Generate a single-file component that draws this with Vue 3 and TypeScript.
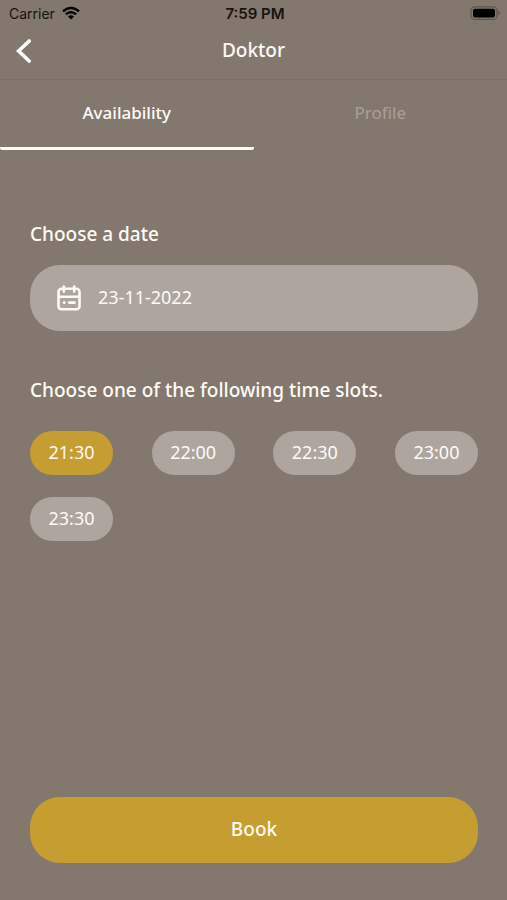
<script setup lang="ts">
import { ref } from 'vue'

type Tab = 'Availability' | 'Profile'

const tabs: Tab[] = ['Availability', 'Profile']
const activeTab = ref<Tab>('Availability')
const date = ref('23-11-2022')
const slots: string[] = ['21:30', '22:00', '22:30', '23:00', '23:30']
const selectedSlot = ref('21:30')
</script>

<template>
  <div class="screen">
    <div class="status">
      <div class="carrier">
        <span>Carrier</span>
        <svg class="wifi" viewBox="0 0 18 14" aria-hidden="true">
          <path d="M0.2 4.6C5.2-0.7 12.8-0.7 17.8 4.6L16.1 6.3C12 2.2 6 2.2 1.9 6.3Z" />
          <path d="M3.1 7.5C6.5 4.1 11.5 4.1 14.9 7.5L13.2 9.2C10.7 6.8 7.3 6.8 4.8 9.2Z" />
          <path d="M6 10.4C7.8 8.8 10.2 8.8 12 10.4L9 13.5Z" />
        </svg>
      </div>
      <span class="clock">7:59 PM</span>
      <svg class="battery" viewBox="0 0 31 14" aria-hidden="true">
        <rect class="shell" x="1" y="0.8" width="26" height="12.6" rx="3.6" />
        <rect x="3" y="2.8" width="22" height="8.6" rx="1.8" />
        <path class="tip" d="M28.4 4.6C30.4 5.2 30.4 9 28.4 9.6Z" />
      </svg>
    </div>

    <header class="header">
      <button class="back" type="button" aria-label="Back">
        <svg viewBox="0 0 16 24" aria-hidden="true">
          <path d="M13.2 2L2.6 12L13.2 22" />
        </svg>
      </button>
      <h1>Doktor</h1>
    </header>

    <nav class="tabs" role="tablist">
      <button
        v-for="tab in tabs"
        :key="tab"
        class="tab"
        :class="{ active: tab === activeTab }"
        type="button"
        role="tab"
        :aria-selected="tab === activeTab"
        @click="activeTab = tab"
      >
        {{ tab }}
      </button>
    </nav>

    <main class="content">
      <label class="title" for="date">Choose a date</label>
      <div class="date">
        <svg viewBox="0 0 24 26" aria-hidden="true">
          <rect x="1.5" y="3.7" width="21" height="20.6" rx="3" />
          <path d="M2 11.8H22M6.8 1.5V6.6M17.2 1.5V6.6M12.2 17.6H17.6M7 17.6H7.4" />
        </svg>
        <input id="date" v-model="date" type="text" readonly />
      </div>

      <h2 id="slots-title" class="title">Choose one of the following time slots.</h2>
      <div class="slots" role="group" aria-labelledby="slots-title">
        <button
          v-for="slot in slots"
          :key="slot"
          class="slot"
          :class="{ selected: slot === selectedSlot }"
          type="button"
          :aria-pressed="slot === selectedSlot"
          @click="selectedSlot = slot"
        >
          {{ slot }}
        </button>
      </div>

      <button class="book" type="button">Book</button>
    </main>
  </div>
</template>

<style>
body {
  background: #82786d;
}
</style>

<style scoped>
.screen {
  box-sizing: border-box;
  display: flex;
  flex-direction: column;
  min-height: 100vh;
  background: #82786d;
  color: #fffaf5;
  font-family: "Noto Sans", sans-serif;
}

button,
input {
  margin: 0;
  padding: 0;
  border: 0;
  background: none;
  color: inherit;
  font: inherit;
}

button {
  cursor: pointer;
}

.status {
  display: grid;
  grid-template-columns: 1fr auto 1fr;
  align-items: center;
  height: 26px;
  padding: 0 6px 0 9px;
  color: #16130f;
  font-family: Inter, sans-serif;
  font-size: 14px;
}

.carrier {
  display: flex;
  align-items: center;
  gap: 7px;
}

.wifi {
  width: 18px;
  height: 14px;
  fill: #000;
}

.clock {
  font-size: 15px;
  font-weight: 600;
}

.battery {
  justify-self: end;
  width: 31px;
  height: 14px;
}

.shell {
  fill: none;
  stroke: #5d564e;
  stroke-width: 1.2;
}

.tip {
  fill: #5d564e;
}

.header {
  display: grid;
  grid-template-columns: 48px 1fr 48px;
  align-items: center;
  height: 49px;
  padding-bottom: 4px;
  border-bottom: 1px solid #786f65;
}

.back {
  display: flex;
  align-items: center;
  justify-content: center;
  height: 48px;
}

.back svg {
  width: 16px;
  height: 24px;
  fill: none;
  stroke: #fff;
  stroke-width: 3.6;
  stroke-linecap: round;
}

h1 {
  margin: 0;
  padding-bottom: 2px;
  font-size: 19px;
  font-weight: 500;
  line-height: 24px;
  text-align: center;
}

.tabs {
  display: grid;
  grid-template-columns: 1fr 1fr;
  height: 70px;
}

.tab {
  padding-bottom: 3px;
  border-bottom: 3px solid transparent;
  border-radius: 2px;
  color: #a9a098;
  font-size: 17px;
}

.tab.active {
  border-bottom-color: #fffaf5;
  color: #fffaf5;
  font-weight: 500;
}

.content {
  display: flex;
  flex: 1;
  flex-direction: column;
  padding: 71px 29px 37px 30px;
}

.title {
  margin: 0;
  font-size: 19px;
  font-weight: 500;
  line-height: 26px;
}

.date {
  display: flex;
  align-items: center;
  gap: 17px;
  height: 66px;
  margin: 18px 0 46px;
  padding: 0 27px;
  border-radius: 30px;
  background: #aea59f;
}

.date svg {
  flex: none;
  width: 24px;
  height: 26px;
  fill: none;
  stroke: #fffaf5;
  stroke-width: 2.6;
  stroke-linecap: round;
}

.date input {
  flex: 1;
  min-width: 0;
  padding-bottom: 2px;
  font-size: 18px;
}

.slots {
  display: grid;
  grid-template-columns: repeat(4, 83px);
  justify-content: space-between;
  gap: 22px 0;
  margin: 28px 0;
}

.slot {
  height: 44px;
  padding-bottom: 2px;
  border-radius: 22px;
  background: #aea59f;
  font-size: 18px;
}

.slot.selected {
  background: #c59d30;
}

.book {
  height: 66px;
  margin-top: auto;
  padding-bottom: 2px;
  border-radius: 30px;
  background: #c59d30;
  font-size: 19px;
  font-weight: 500;
}
</style>
